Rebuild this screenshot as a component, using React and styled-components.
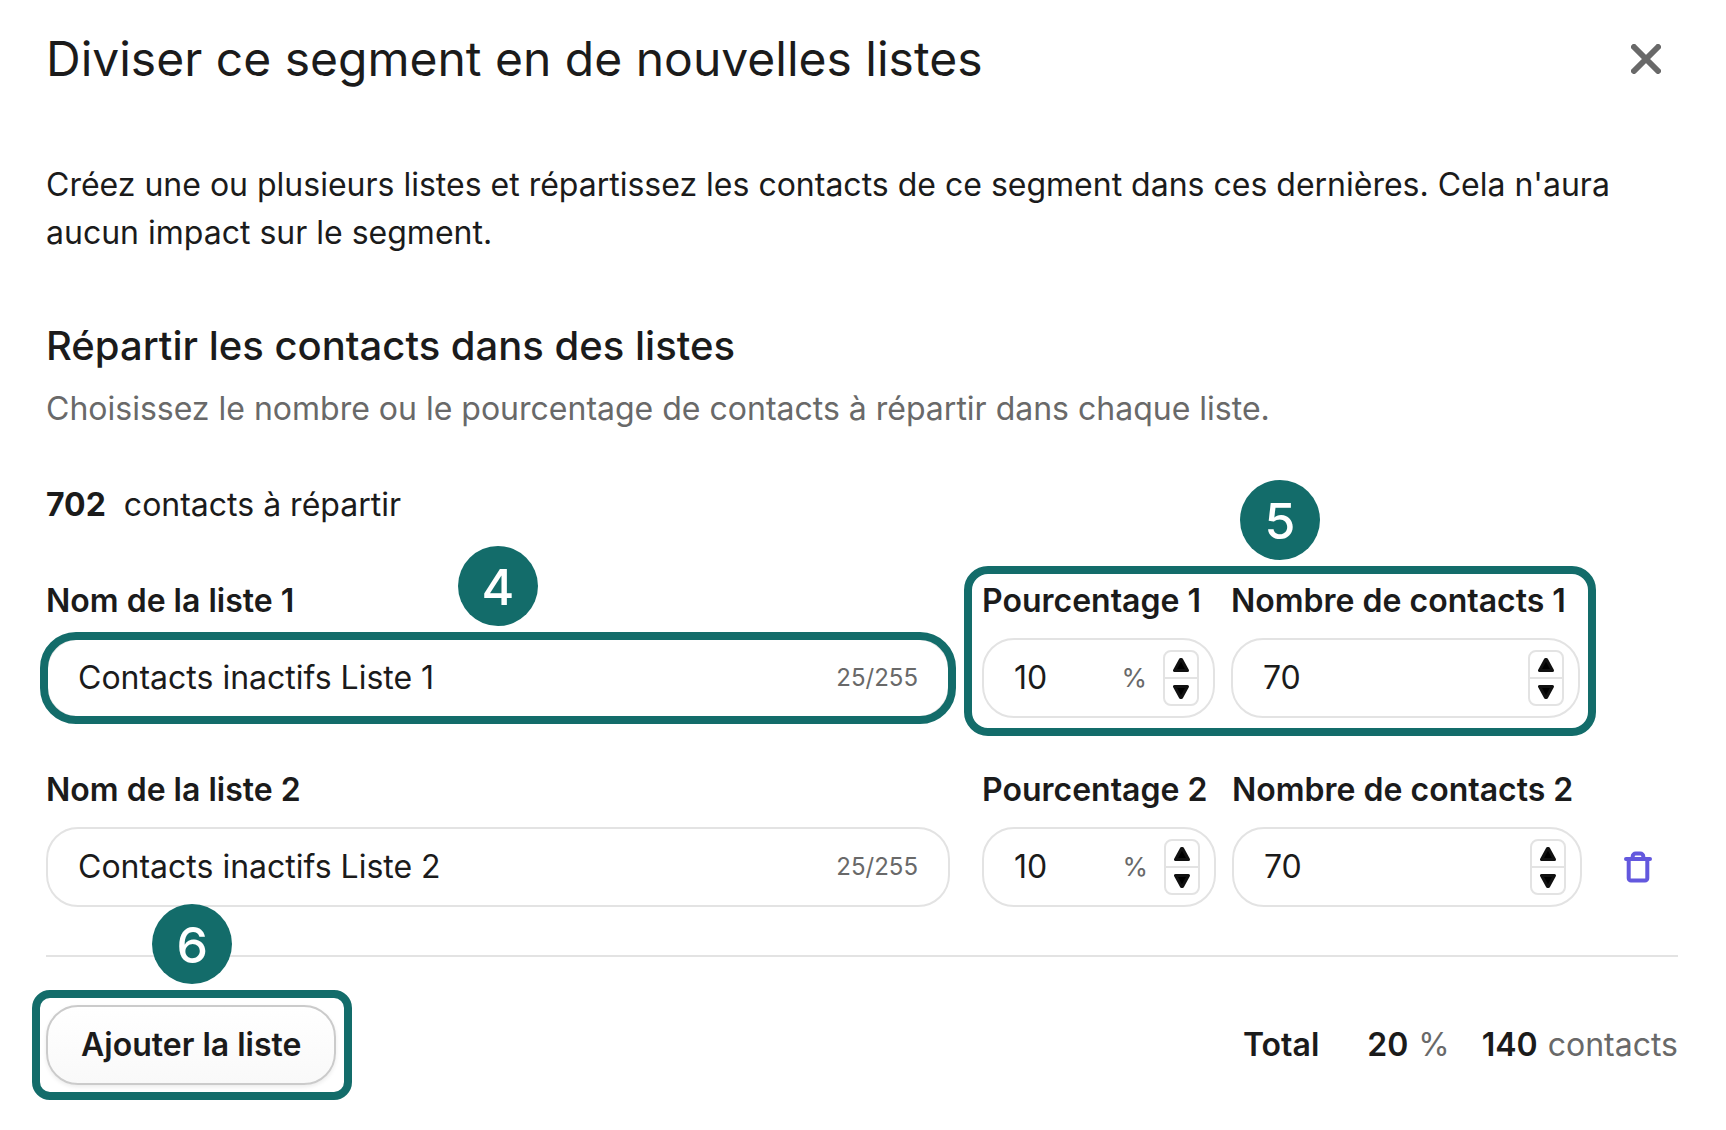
import React, { useState } from "react";
import styled, { createGlobalStyle } from "styled-components";

const ink = "#1b1b1b";
const muted = "#696969";
const line = "#e3e3e3";
const teal = "#136c6a";

const GlobalStyle = createGlobalStyle`
  *, *::before, *::after { box-sizing: border-box; }
  body {
    margin: 0;
    background: #fff;
    color: ${ink};
    font-family: Inter, "Liberation Sans", sans-serif;
    font-size: 32px;
    line-height: 48px;
  }
  button, input { font: inherit; color: inherit; }
`;

const Dialog = styled.main`
  padding: 27px 48px 28px 46px;
`;

const Header = styled.header`
  display: flex;
  align-items: center;
  justify-content: space-between;
  height: 64px;
`;

const Title = styled.h1`
  margin: 0;
  font-size: 48px;
  line-height: 64px;
  font-weight: 400;
`;

const IconButton = styled.button`
  display: flex;
  align-items: center;
  justify-content: center;
  width: 64px;
  height: 64px;
  padding: 0;
  border: 0;
  background: none;
  color: ${(p) => p.$color};
  cursor: pointer;
`;

const Intro = styled.p`
  margin: 70px 0 0;
`;

const Subtitle = styled.h2`
  margin: 61px 0 0;
  font-size: 40px;
  line-height: 56px;
  font-weight: 500;
`;

const Hint = styled.p`
  margin: 11px 0 0;
  color: ${muted};
`;

const Available = styled.p`
  display: flex;
  gap: 18px;
  margin: 48px 0 0;
`;

const Rows = styled.div`
  display: grid;
  gap: 48px;
  margin-top: 48px;
  padding-bottom: 48px;
  border-bottom: 2px solid ${line};
`;

const Row = styled.div`
  display: flex;
  align-items: flex-end;
`;

const NameField = styled.div`
  flex: 1;
  min-width: 0;
  margin-right: 32px;
`;

const Amounts = styled.div`
  position: relative;
  display: flex;
  gap: 16px;
`;

const AmountField = styled.div`
  width: ${(p) => p.$width}px;
`;

const Label = styled.label`
  display: block;
  margin-bottom: 13px;
  font-weight: 600;
  white-space: nowrap;
`;

const Control = styled.div`
  position: relative;
  display: flex;
  align-items: center;
  height: 80px;
  padding: 0 ${(p) => (p.$stepped ? 14 : 30)}px 0 30px;
  border: 2px solid ${line};
  border-radius: 32px;
  background: #fff;
`;

const Input = styled.input`
  flex: 1;
  min-width: 0;
  width: 0;
  padding: 0;
  border: 0;
  outline: 0;
  background: none;
  appearance: textfield;
  &::-webkit-inner-spin-button,
  &::-webkit-outer-spin-button { appearance: none; margin: 0; }
`;

const Counter = styled.span`
  font-size: 24px;
  color: ${muted};
`;

const Unit = styled.span`
  margin-right: 16px;
  font-size: 26px;
  color: ${muted};
`;

const Stepper = styled.span`
  display: flex;
  flex-direction: column;
  width: 36px;
  height: 56px;
  border: 2px solid ${line};
  border-radius: 8px;
`;

const Step = styled.button`
  display: flex;
  flex: 1;
  align-items: center;
  justify-content: center;
  padding: 0;
  border: 0;
  background: none;
  cursor: pointer;
  & + & { border-top: 2px solid ${line}; }
`;

const RowEnd = styled.div`
  display: flex;
  align-items: center;
  justify-content: flex-end;
  width: ${(p) => p.$width}px;
  height: 80px;
  padding-right: 8px;
`;

const OutlineBox = styled.span`
  position: absolute;
  inset: ${(p) => p.$inset};
  border: 8px solid ${teal};
  border-radius: ${(p) => p.$radius}px;
  pointer-events: none;
`;

const Badge = styled.span`
  position: absolute;
  left: calc(50% - 40px);
  bottom: calc(100% + 14px);
  display: flex;
  align-items: center;
  justify-content: center;
  width: 80px;
  height: 80px;
  padding-top: 2px;
  border-radius: 50%;
  background: ${teal};
  color: #fff;
  font-size: 50px;
  font-weight: 500;
`;

const Footer = styled.footer`
  display: flex;
  align-items: center;
  justify-content: space-between;
  margin-top: 48px;
`;

const AddWrap = styled.div`
  position: relative;
`;

const AddButton = styled.button`
  display: block;
  height: 80px;
  padding: 0 33px;
  border: 2px solid #cbcbcb;
  border-radius: 32px;
  background: linear-gradient(#fff, #f9f9f9);
  box-shadow: 0 2px 4px rgba(0, 0, 0, 0.08);
  font-weight: 600;
  cursor: pointer;
`;

const Totals = styled.div`
  display: flex;
  color: ${muted};
`;

const Strong = styled.strong`
  color: ${ink};
  font-weight: ${(p) => p.$weight || 600};
`;

const Total = styled.span`
  display: flex;
  gap: 10px;
  margin-left: ${(p) => p.$gap}px;
`;

const CloseIcon = () => (
  <svg width="30" height="30" viewBox="0 0 30 30" fill="none" stroke="currentColor" strokeWidth="6" strokeLinecap="round" aria-hidden="true">
    <path d="M3 3l24 24M27 3L3 27" />
  </svg>
);

const TrashIcon = () => (
  <svg width="28" height="32" viewBox="0 0 28 32" fill="none" stroke="currentColor" strokeWidth="4" strokeLinejoin="round" strokeLinecap="round" aria-hidden="true">
    <path d="M2 8h24M8.700 7.500V5.500a3 3 0 0 1 3-3h4.600a3 3 0 0 1 3 3v2M4.700 8.500v18.700a2.300 2.300 0 0 0 2.300 2.300h14a2.300 2.300 0 0 0 2.300-2.300V8.500" />
  </svg>
);

const Triangle = ({ down }) => (
  <svg width="16" height="14" viewBox="0 0 16 14" fill="#000" stroke="#111" strokeWidth="3" strokeLinejoin="round" aria-hidden="true">
    <path d={down ? "M1.500 1.500h13L8.500 12.500h-1z" : "M1.500 12.500h13L8.500 1.500h-1z"} />
  </svg>
);

function Callout({ number, inset, radius }) {
  return (
    <OutlineBox $inset={inset} $radius={radius}>
      <Badge>{number}</Badge>
    </OutlineBox>
  );
}

function NumberField({ id, label, value, onChange, unit, width }) {
  return (
    <AmountField $width={width}>
      <Label htmlFor={id}>{label}</Label>
      <Control $stepped>
        <Input id={id} type="number" min="0" value={value} onChange={(e) => onChange(Number(e.target.value))} />
        {unit && <Unit>{unit}</Unit>}
        <Stepper>
          <Step type="button" aria-label={`Augmenter ${label}`} onClick={() => onChange(value + 1)}><Triangle /></Step>
          <Step type="button" aria-label={`Diminuer ${label}`} onClick={() => onChange(Math.max(0, value - 1))}><Triangle down /></Step>
        </Stepper>
      </Control>
    </AmountField>
  );
}

export default function App() {
  const [lists, setLists] = useState([
    { name: "Contacts inactifs Liste 1", percent: 10, count: 70 },
    { name: "Contacts inactifs Liste 2", percent: 10, count: 70 },
  ]);
  const update = (i, patch) => setLists(lists.map((l, n) => (n === i ? { ...l, ...patch } : l)));
  const sum = (key) => lists.reduce((total, l) => total + l[key], 0);

  return (
    <>
      <GlobalStyle />
      <Dialog>
        <Header>
          <Title>Diviser ce segment en de nouvelles listes</Title>
          <IconButton type="button" aria-label="Fermer" $color={muted}><CloseIcon /></IconButton>
        </Header>
        <Intro>
          Créez une ou plusieurs listes et répartissez les contacts de ce segment dans ces dernières. Cela n'aura aucun impact sur le segment.
        </Intro>
        <Subtitle>Répartir les contacts dans des listes</Subtitle>
        <Hint>Choisissez le nombre ou le pourcentage de contacts à répartir dans chaque liste.</Hint>
        <Available><Strong $weight={700}>702</Strong> contacts à répartir</Available>
        <Rows>
          {lists.map((list, i) => {
            const n = i + 1;
            const first = i === 0;
            return (
              <Row key={n}>
                <NameField>
                  <Label htmlFor={`name-${n}`}>Nom de la liste {n}</Label>
                  <Control>
                    <Input id={`name-${n}`} type="text" maxLength={255} value={list.name} onChange={(e) => update(i, { name: e.target.value })} />
                    <Counter>{list.name.length}/255</Counter>
                    {first && <Callout number={4} inset="-8px" radius={36} />}
                  </Control>
                </NameField>
                <Amounts>
                  {first && <Callout number={5} inset="-11px -16px -18px -18px" radius={24} />}
                  <NumberField id={`percent-${n}`} label={`Pourcentage ${n}`} unit="%" width={first ? 233 : 234} value={list.percent} onChange={(percent) => update(i, { percent })} />
                  <NumberField id={`count-${n}`} label={`Nombre de contacts ${n}`} width={first ? 349 : 350} value={list.count} onChange={(count) => update(i, { count })} />
                </Amounts>
                <RowEnd $width={first ? 98 : 96}>
                  {!first && (
                    <IconButton type="button" aria-label={`Supprimer la liste ${n}`} $color="#6358de" onClick={() => setLists(lists.filter((_, k) => k !== i))}>
                      <TrashIcon />
                    </IconButton>
                  )}
                </RowEnd>
              </Row>
            );
          })}
        </Rows>
        <Footer>
          <AddWrap>
            <AddButton type="button" onClick={() => setLists([...lists, { name: "", percent: 0, count: 0 }])}>Ajouter la liste</AddButton>
            <Callout number={6} inset="-15px -16px -15px -14px" radius={18} />
          </AddWrap>
          <Totals>
            <Strong>Total</Strong>
            <Total $gap={48}><Strong>{sum("percent")}</Strong> %</Total>
            <Total $gap={32}><Strong>{sum("count")}</Strong> contacts</Total>
          </Totals>
        </Footer>
      </Dialog>
    </>
  );
}
